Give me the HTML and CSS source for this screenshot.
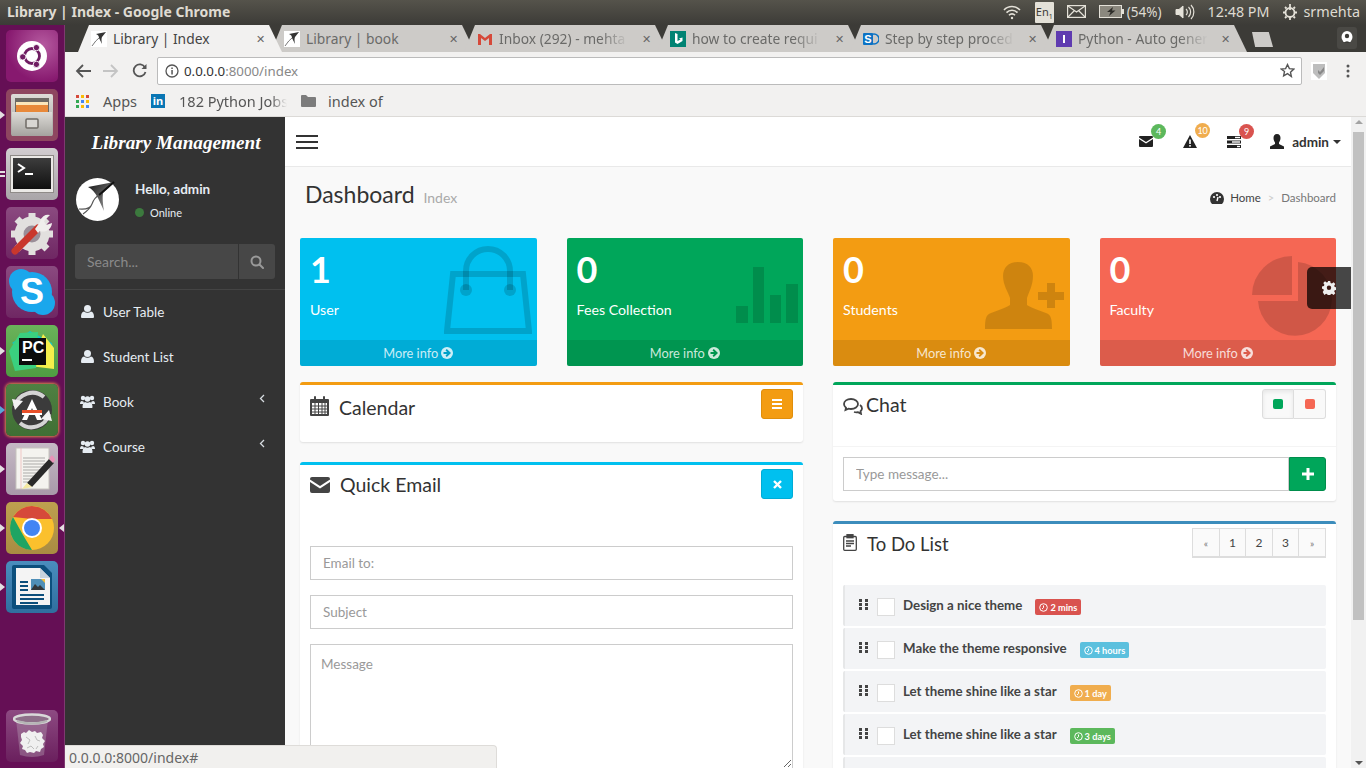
FILE: index.html
```html
<!DOCTYPE html>
<html lang="en">
<head>
    <meta charset="UTF-8">
    <title>Library | Index - Google Chrome</title>
    <link rel="stylesheet" href="styles.css">
</head>
<body>

    <!-- Ubuntu top panel -->
    <div class="panel">
        <div class="panel-title">Library | Index - Google Chrome</div>
        <div class="panel-right">
            <svg width="20" height="16" viewBox="0 0 20 16" fill="none" stroke="#e4e1d8" stroke-width="1.6"><path d="M2 6a11 11 0 0 1 16 0M4.500 8.600a7.500 7.500 0 0 1 11 0M7 11.200a4 4 0 0 1 6 0"/><circle cx="10" cy="14" r="1.200" fill="#e4e1d8" stroke="none"/></svg>
            <span class="ind-lang">En<sub>1</sub></span>
            <svg width="19" height="13" viewBox="0 0 19 13" fill="none" stroke="#e4e1d8" stroke-width="1.200"><rect x=".6" y=".6" width="17.800" height="11.800"/><path d="M1 1l8.500 6L18 1M1 12l6.500-6.500M18 12l-6.500-6.500"/></svg>
            <span class="ind-batt">
                <svg width="25" height="13" viewBox="0 0 25 13"><rect x=".5" y=".5" width="22" height="12" fill="#8b887e" stroke="#e4e1d8"/><rect x="23" y="4" width="2" height="5" fill="#e4e1d8"/><path d="M14 2l-6 5h3.500L10 11l6.500-5.500H13z" fill="#2e2d29"/></svg>
                (54%)
            </span>
            <svg width="20" height="16" viewBox="0 0 20 16" fill="none" stroke="#e4e1d8"><path d="M1 5.500h3l4-3.500v12l-4-3.500H1z" fill="#e4e1d8"/><path d="M11 5a4 4 0 0 1 0 6M13.500 3a7 7 0 0 1 0 10M16 1a10 10 0 0 1 0 14" stroke-width="1.200"/></svg>
            <span class="ind-clock">12:48 PM</span>
            <span class="ind-user">
                <svg width="16" height="16" viewBox="0 0 16 16" fill="none" stroke="#e4e1d8" stroke-width="1.800"><circle cx="8" cy="8.500" r="4.500"/><path d="M8 0v6M8 12.500v3.500M1 8.500h2M13 8.500h2M3 3l1.500 1.500M11.500 4.500L13 3M3 14l1.500-1.500M11.500 12.500L13 14"/></svg>
                srmehta
            </span>
        </div>
    </div>

    <div class="desktop">

        <!-- Launcher -->
        <div class="launcher">
            <div class="tile tile-ubuntu">
                <svg width="30" height="30" viewBox="0 0 34 34"><circle cx="17" cy="17" r="17" fill="#fff"/><circle cx="17" cy="17" r="8.500" fill="none" stroke="#6f1d62" stroke-width="3.200"/><circle cx="6.500" cy="18" r="3.600" fill="#6f1d62" stroke="#fff"/><circle cx="22" cy="7.500" r="3.600" fill="#6f1d62" stroke="#fff"/><circle cx="22" cy="26.500" r="3.600" fill="#6f1d62" stroke="#fff"/></svg>
            </div>
            <div class="tile tile-files has-pip">
                <svg width="42" height="44" viewBox="0 0 42 44"><defs><linearGradient id="cabinet" x1="0" y1="0" x2="0" y2="1"><stop offset="0" stop-color="#dedcd8"/><stop offset="1" stop-color="#a5a39f"/></linearGradient></defs><rect y="1" width="42" height="42" rx="2" fill="url(#cabinet)"/><rect x="4" y="5" width="34" height="14" fill="#6d6964"/><rect x="5" y="9" width="32" height="3" fill="#fbe6bb"/><rect x="5" y="12" width="32" height="7" fill="#e8893a"/><rect x="1" y="19" width="40" height="24" fill="url(#cabinet)"/><rect x="15" y="26" width="12" height="9" rx="1" fill="#d8d6d2" stroke="#6f6b66" stroke-width="1.500"/></svg>
            </div>
            <div class="tile tile-term has-pip-double">
                <svg width="44" height="38" viewBox="0 0 44 38"><defs><linearGradient id="termbg" x1="0" y1="0" x2="0" y2="1"><stop offset="0" stop-color="#3d3d3d"/><stop offset="1" stop-color="#101010"/></linearGradient></defs><rect x=".5" y=".5" width="43" height="37" fill="#ebe9e6" stroke="#8f8b88"/><rect x="3" y="3" width="38" height="31" fill="url(#termbg)"/><path d="M8 9l6 4-6 4" fill="none" stroke="#fff" stroke-width="2"/><rect x="15" y="18" width="8" height="2" fill="#fff"/></svg>
            </div>
            <div class="tile tile-plain">
                <svg width="46" height="46" viewBox="0 0 46 46"><circle cx="23" cy="24" r="13" fill="#9a8e98" stroke="#e2e0de" stroke-width="9"/><path d="M23 3v6M23 39v6M2 24h6M38 24h6M8 9l4 4M34 35l4 4M8 39l4-4M34 13l4-4" stroke="#e2e0de" stroke-width="7"/><path d="M6 41L29 18" stroke="#c9372c" stroke-width="7" stroke-linecap="round"/><path d="M26 19l5-7a8 8 0 0 1 10-7l-6 6 2 4 6-2a9 9 0 0 1-12 8l-2 2z" fill="#f0eeec"/></svg>
            </div>
            <div class="tile tile-plain">
                <svg width="48" height="48" viewBox="0 0 48 48"><circle cx="13" cy="13" r="12" fill="#1aa7ec"/><circle cx="35" cy="35" r="12" fill="#1aa7ec"/><circle cx="24" cy="24" r="20" fill="#1aa7ec"/><text x="24" y="36" class="skype-s">S</text></svg>
            </div>
            <div class="tile tile-pycharm has-pip">
                <svg width="48" height="48" viewBox="0 0 48 48"><path d="M4 16L22 4l22 12 2 12-14 4z" fill="#12c6c9"/><path d="M35 7l11 14 0 21-24-3z" fill="#f5ee4b"/><path d="M1 24L12 6l18-1-2 36L7 44z" fill="#3ad07f"/><rect x="11" y="11" width="27" height="27" fill="#0c0c0c"/><text x="14" y="26" class="pc-label">PC</text><rect x="14" y="32" width="10" height="2" fill="#fff"/></svg>
            </div>
            <div class="tile tile-update has-pip-blue">
                <svg width="44" height="44" viewBox="0 0 44 44"><circle cx="22" cy="22" r="20" fill="#3b3b3b"/><path d="M5 18a18 18 0 0 1 29-9M39 26a18 18 0 0 1-29 9" fill="none" stroke="#d4d4d4" stroke-width="4"/><path d="M2 11l11 2-8 9zM42 33l-11-2 8-9z" fill="#f2f2f2"/><path d="M22 11l-10 21h5l5-12 5 12h5z" fill="#fff"/><rect x="12" y="22" width="20" height="3" fill="#e8502a"/><rect x="12" y="25" width="20" height="2" fill="#fff"/></svg>
            </div>
            <div class="tile tile-gedit has-pip">
                <svg width="46" height="44" viewBox="0 0 46 44"><rect x="7" y="1" width="33" height="41" fill="#f4f3ef" stroke="#c6c3bd"/><path d="M12 1v41" stroke="#eeb6b6" stroke-width=".7"/><path d="M14 11h22M14 14h22M14 17h22M14 20h22M14 23h18M14 26h16M14 29h14M14 32h12M14 35h10" stroke="#8d8d8d" stroke-width=".7"/><path d="M18 36l22-24 5 4-22 24z" fill="#2a2a2a"/><path d="M40 12l2-3q1-1 2 0l2 3q.5 1-.5 2l-1.500 2z" fill="#e893b8"/><path d="M13 42l5-6 5 4z" fill="#f4e8a0"/></svg>
            </div>
            <div class="tile tile-chrome has-pip-both">
                <svg width="46" height="46" viewBox="0 0 46 46"><circle cx="23" cy="23" r="22" fill="#fbc02d"/><path d="M4 12A22 22 0 0 1 43 14L23 14z" fill="#d6493a"/><path d="M4 12L14 30 23 45A22 22 0 0 1 4 12z" fill="#1fa463"/><circle cx="23" cy="23" r="10" fill="#fff"/><circle cx="23" cy="23" r="8" fill="#4285f4"/></svg>
            </div>
            <div class="tile tile-writer has-pip">
                <svg width="44" height="46" viewBox="0 0 44 46"><path d="M4 1h30l8 8v34q0 2-2 2H4q-2 0-2-2V3q0-2 2-2z" fill="#0c4f7c"/><path d="M6 4h24l10 10v27H6z" fill="#f4f4f4"/><path d="M30 4v10h10z" fill="#c7d4dd"/><path d="M10 17h8v2h-8zM10 21h8v2h-8zM10 25h8v2h-8zM10 30h24v2H10zM10 34h24v2H10zM10 38h18v2H10z" fill="#0c4f7c"/><rect x="21" y="15" width="14" height="11" fill="#4f8fb8"/><path d="M21 26l4-6 3 3 2-2 5 5z" fill="#33383c"/><path d="M31 15h4v4z" fill="#f0c040"/></svg>
            </div>
            <div class="tile tile-trash">
                <svg width="38" height="46" viewBox="0 0 38 46"><path d="M3 6l4 36q12 4 24 0l4-36z" fill="#b79fb5" opacity=".4"/><ellipse cx="19" cy="6" rx="18" ry="4.500" fill="#8e6f89" stroke="#d9d9d9" stroke-width="2.500"/><path d="M4 8q15 5 30 0" fill="none" stroke="#b5b5b5" stroke-width="2"/><path d="M8 21l3-2 2 1 3-3 3 2 3-1 2 2 4-1 2 3-1 3 3 3-2 3 1 3-3 2-1 3-4-1-2 2-4-1-3 1-2-3-3-1 1-3-3-3 2-3-1-3z" fill="#f0f0f0"/><path d="M13 24l4 3-2 4M22 23l2 4 3 1M14 35l4-2 3 3M25 33l-2 3" fill="none" stroke="#bdbdbd"/></svg>
            </div>
        </div>

        <div class="browser">

            <!-- Tabs -->
            <div class="tabstrip">
                <div class="tab active">
                    <svg class="favicon" width="16" height="16" viewBox="0 0 16 16"><rect width="16" height="16" fill="#fff"/><path d="M15 1L5 3q3 1 3 4l3 6q-1-5 0-7z" fill="#333"/><path d="M8 7Q5 9 1 15" fill="none" stroke="#777"/></svg>
                    <span class="tab-title">Library | Index</span>
                    <span class="tab-close">&#10005;</span>
                </div>
                <div class="tab">
                    <svg class="favicon" width="16" height="16" viewBox="0 0 16 16"><rect width="16" height="16" fill="#fff"/><path d="M15 1L5 3q3 1 3 4l3 6q-1-5 0-7z" fill="#333"/><path d="M8 7Q5 9 1 15" fill="none" stroke="#777"/></svg>
                    <span class="tab-title">Library | book</span>
                    <span class="tab-close">&#10005;</span>
                </div>
                <div class="tab">
                    <svg class="favicon" width="16" height="16" viewBox="0 0 16 16"><path d="M1 3v11h3V7l4 3 4-3v7h3V3h-2L8 7 3 3z" fill="#d6493a"/></svg>
                    <span class="tab-title fade">Inbox (292) - mehta</span>
                    <span class="tab-close">&#10005;</span>
                </div>
                <div class="tab">
                    <svg class="favicon" width="16" height="16" viewBox="0 0 16 16"><rect width="16" height="16" fill="#008373"/><path d="M5 2l2.500 1v7l3-1.500-1.500-1 3.500-1v3.500L7.500 13 5 11.500z" fill="#fff"/></svg>
                    <span class="tab-title fade">how to create requi</span>
                    <span class="tab-close">&#10005;</span>
                </div>
                <div class="tab">
                    <svg class="favicon" width="16" height="16" viewBox="0 0 16 16"><circle cx="11" cy="8" r="5" fill="none" stroke="#0b72c4" stroke-width="1.500"/><rect y="2" width="10" height="12" rx="1" fill="#0b72c4"/><text x="5" y="12" class="fav-s">S</text></svg>
                    <span class="tab-title fade">Step by step proced</span>
                    <span class="tab-close">&#10005;</span>
                </div>
                <div class="tab">
                    <svg class="favicon" width="16" height="16" viewBox="0 0 16 16"><rect width="16" height="16" fill="#5f3bb0"/><rect x="7" y="4" width="2" height="8" fill="#fff"/></svg>
                    <span class="tab-title fade">Python - Auto gener</span>
                    <span class="tab-close">&#10005;</span>
                </div>
                <div class="newtab"></div>
                <div class="profile-btn">
                    <svg width="12" height="14" viewBox="0 0 12 14"><ellipse cx="6" cy="6" rx="5.500" ry="6" fill="#fff"/><circle cx="6" cy="5" r="2.200" fill="#3c3b37"/><path d="M2.500 12q3.500-3.500 7 0" fill="#3c3b37"/></svg>
                </div>
            </div>

            <!-- Address bar -->
            <div class="toolbar">
                <svg width="16" height="14" viewBox="0 0 16 14" fill="none" stroke="#555" stroke-width="1.800"><path d="M16 7H2M8 1L2 7l6 6"/></svg>
                <svg class="tool-fwd" width="16" height="14" viewBox="0 0 16 14" fill="none" stroke="#c4c4c4" stroke-width="1.800"><path d="M0 7h14M8 1l6 6-6 6"/></svg>
                <svg class="tool-reload" width="15" height="15" viewBox="0 0 15 15" fill="none" stroke="#555" stroke-width="1.800"><path d="M13 4.500A6 6 0 1 0 13.500 9"/><path d="M14.500 1v5h-5z" fill="#555" stroke="none"/></svg>
                <div class="urlbar">
                    <svg class="url-info" width="14" height="14" viewBox="0 0 14 14"><circle cx="7" cy="7" r="6" fill="none" stroke="#555" stroke-width="1.300"/><rect x="6.300" y="6" width="1.500" height="4.500" fill="#555"/><rect x="6.300" y="3.500" width="1.500" height="1.500" fill="#555"/></svg>
                    <span class="url-host">0.0.0.0</span><span class="url-rest">:8000/index</span>
                    <svg class="url-star" width="15" height="15" viewBox="0 0 24 24" fill="none" stroke="#555" stroke-width="2.200"><path d="M12 2.500l3 6.500 7 .8-5.200 4.800 1.400 7L12 17l-6.200 3.600 1.400-7L2 9.800 9 9z"/></svg>
                </div>
                <svg class="tool-ext" width="16" height="18" viewBox="0 0 16 18"><rect width="16" height="18" fill="#fff"/><path d="M2 2h12v9l-6 6-6-6z" fill="#bdbdbd"/><path d="M7 8l2 2 4-5v4l-4 4-2-2z" fill="#888"/></svg>
                <svg class="tool-menu" width="4" height="14" viewBox="0 0 4 14" fill="#555"><circle cx="2" cy="2" r="1.500"/><circle cx="2" cy="7" r="1.500"/><circle cx="2" cy="12" r="1.500"/></svg>
            </div>

            <!-- Bookmarks -->
            <div class="bookmarks">
                <svg width="13" height="13" viewBox="0 0 13 13"><rect width="3" height="3" fill="#d6493a"/><rect x="5" width="3" height="3" fill="#fbbc05"/><rect x="10" width="3" height="3" fill="#d6493a"/><rect y="5" width="3" height="3" fill="#34a853"/><rect x="5" y="5" width="3" height="3" fill="#4285f4"/><rect x="10" y="5" width="3" height="3" fill="#fbbc05"/><rect y="10" width="3" height="3" fill="#34a853"/><rect x="5" y="10" width="3" height="3" fill="#fbbc05"/><rect x="10" y="10" width="3" height="3" fill="#4285f4"/></svg>
                <span class="bm-apps-text">Apps</span>
                <span class="bm-in">in</span>
                <span class="bm-jobs">182 Python Jobs</span>
                <svg class="bm-folder" width="15" height="12" viewBox="0 0 15 12"><path d="M0 1q0-1 1-1h4l2 2h7q1 0 1 1v8q0 1-1 1H1q-1 0-1-1z" fill="#7c7c7c"/></svg>
                <span>index of</span>
            </div>

            <div class="page">

                <!-- Sidebar -->
                <aside class="sidebar">
                    <div class="brand">Library Management</div>
                    <div class="user-panel">
                        <svg class="avatar" width="43" height="43" viewBox="0 0 43 43"><defs><linearGradient id="wing" x1="0" y1="0" x2="1" y2="1"><stop offset="0" stop-color="#111"/><stop offset="1" stop-color="#aaa"/></linearGradient></defs><circle cx="21.500" cy="21.500" r="21.500" fill="#fff"/><path d="M38 4L12 9q6 3 10 11l6 13q-2-11-1-18z" fill="url(#wing)"/><path d="M38 4L23 17" stroke="#111" stroke-width="2"/><path d="M23 17q-5 3-7 9t-13 5M16 26q-2 5-9 10" fill="none" stroke="#555" stroke-width="1.100"/></svg>
                        <div class="user-info">
                            <div class="user-name">Hello, admin</div>
                            <div class="user-status"><span class="status-dot"></span>Online</div>
                        </div>
                    </div>
                    <div class="search">
                        <input type="text" placeholder="Search...">
                        <div class="search-btn">
                            <svg width="14" height="14" viewBox="0 0 14 14" fill="none" stroke="#999" stroke-width="2"><circle cx="6" cy="6" r="4.500"/><path d="M9.500 9.500L13 13" stroke-linecap="round"/></svg>
                        </div>
                    </div>
                    <ul class="menu">
                        <li>
                            <svg width="13" height="13" viewBox="0 0 13 13" fill="#e6ecf2"><circle cx="6.500" cy="3.500" r="3.500"/><path d="M1 13q-1 0-1-1 0-5 3-5.500 3.500 2.500 7 0 3 .5 3 5.500 0 1-1 1z"/></svg>
                            User Table
                        </li>
                        <li>
                            <svg width="13" height="13" viewBox="0 0 13 13" fill="#e6ecf2"><circle cx="6.500" cy="3.500" r="3.500"/><path d="M1 13q-1 0-1-1 0-5 3-5.500 3.500 2.500 7 0 3 .5 3 5.500 0 1-1 1z"/></svg>
                            Student List
                        </li>
                        <li>
                            <svg width="15" height="13" viewBox="0 0 15 13" fill="#e6ecf2"><circle cx="3" cy="3" r="2.200"/><circle cx="12" cy="3" r="2.200"/><circle cx="7.500" cy="4" r="2.800"/><path d="M0 9q0-3 2-3l2 1-1 2zM15 9q0-3-2-3l-2 1 1 2zM3 13q-.5 0-.5-1 0-4 2.500-5 2.500 1.500 5 0 2.500 1 2.500 5 0 1-.5 1z"/></svg>
                            Book
                            <svg class="menu-arrow" width="6" height="9" viewBox="0 0 6 9" fill="none" stroke="#d8dde2" stroke-width="1.300"><path d="M5 1L1.500 4.500 5 8"/></svg>
                        </li>
                        <li>
                            <svg width="15" height="13" viewBox="0 0 15 13" fill="#e6ecf2"><circle cx="3" cy="3" r="2.200"/><circle cx="12" cy="3" r="2.200"/><circle cx="7.500" cy="4" r="2.800"/><path d="M0 9q0-3 2-3l2 1-1 2zM15 9q0-3-2-3l-2 1 1 2zM3 13q-.5 0-.5-1 0-4 2.500-5 2.500 1.500 5 0 2.500 1 2.500 5 0 1-.5 1z"/></svg>
                            Course
                            <svg class="menu-arrow" width="6" height="9" viewBox="0 0 6 9" fill="none" stroke="#d8dde2" stroke-width="1.300"><path d="M5 1L1.500 4.500 5 8"/></svg>
                        </li>
                    </ul>
                </aside>

                <div class="main">
                    <!-- Navbar -->
                    <nav class="navbar">
                        <div class="hamburger"><span></span><span></span><span></span></div>
                        <div class="nav-right">
                            <div class="nav-icon">
                                <svg width="14" height="11" viewBox="0 0 14 11" fill="#222"><path d="M0 1q0-1 1-1h12q1 0 1 1v.500L7 6 0 1.500z"/><path d="M0 3l7 4.500L14 3v7q0 1-1 1H1q-1 0-1-1z"/></svg>
                                <span class="badge badge-green">4</span>
                            </div>
                            <div class="nav-icon">
                                <svg width="14" height="13" viewBox="0 0 14 13"><path d="M7 0l7 13H0z" fill="#222"/><rect x="6.200" y="4.500" width="1.600" height="4.500" fill="#fff"/><rect x="6.200" y="10" width="1.600" height="1.600" fill="#fff"/></svg>
                                <span class="badge badge-orange">10</span>
                            </div>
                            <div class="nav-icon">
                                <svg width="14" height="12" viewBox="0 0 14 12"><rect width="14" height="3" fill="#222"/><rect y="4.500" width="14" height="3" fill="#222"/><rect y="9" width="14" height="3" fill="#222"/><rect x="8" y=".8" width="5" height="1.400" fill="#fff"/><rect x="5" y="5.300" width="8" height="1.400" fill="#fff"/><rect x="10" y="9.800" width="3" height="1.400" fill="#fff"/></svg>
                                <span class="badge badge-red">9</span>
                            </div>
                            <div class="nav-user">
                                <svg width="14" height="15" viewBox="0 0 14 15" fill="#222"><path d="M7 0c2.500 0 3.500 2 3.500 4 0 2-1 3.500-1.500 4.500v1.500l5 2.500V15H0v-2.500L5 10V8.500C4.500 7.500 3.500 6 3.500 4c0-2 1-4 3.500-4z"/></svg>
                                <span class="nav-name">admin</span>
                                <span class="caret"></span>
                            </div>
                        </div>
                    </nav>

                    <div class="content">
                        <div class="page-head">
                            <h1>Dashboard <small>Index</small></h1>
                            <div class="crumbs">
                                <svg width="14" height="12" viewBox="0 0 14 12"><path d="M7 0a7 7 0 0 0-7 7q0 3 2 5h10q2-2 2-5a7 7 0 0 0-7-7z" fill="#333"/><circle cx="4" cy="5" r="1.100" fill="#fff"/><circle cx="7" cy="3" r="1.100" fill="#fff"/><circle cx="10" cy="5" r="1.100" fill="#fff"/><path d="M7 9l1-4" stroke="#fff" stroke-width="1.400"/></svg>
                                <span class="crumb-home">Home</span>
                                <span class="crumb-sep">&gt;</span>
                                <span class="crumb-now">Dashboard</span>
                            </div>
                        </div>

                        <!-- Small boxes -->
                        <div class="stats">
                            <div class="stat stat-blue">
                                <div class="stat-body">
                                    <h3>1</h3>
                                    <p>User</p>
                                    <svg class="stat-icon" width="88" height="88" viewBox="0 0 88 88" fill="none" stroke="currentColor" stroke-width="6"><path d="M9 28H79L85 85H3z"/><path d="M22 44V25a22 22 0 0 1 44 0v19"/><circle cx="22" cy="44" r="6" fill="currentColor" stroke="none"/><circle cx="66" cy="44" r="6" fill="currentColor" stroke="none"/></svg>
                                </div>
                                <div class="stat-foot">More info <svg width="12" height="12" viewBox="0 0 12 12"><circle cx="6" cy="6" r="6" fill="currentColor"/><path d="M2.500 5H6L4.500 3.300 5.800 2 10 6 5.800 10 4.500 8.700 6 7H2.500z" class="arrow-cut"/></svg></div>
                            </div>
                            <div class="stat stat-green">
                                <div class="stat-body">
                                    <h3>0</h3>
                                    <p>Fees Collection</p>
                                    <svg class="stat-icon" width="62" height="56" viewBox="0 0 62 56" fill="currentColor"><rect y="39" width="12" height="17"/><rect x="17" width="11" height="56"/><rect x="34" y="28" width="11" height="28"/><rect x="50" y="17" width="12" height="39"/></svg>
                                </div>
                                <div class="stat-foot">More info <svg width="12" height="12" viewBox="0 0 12 12"><circle cx="6" cy="6" r="6" fill="currentColor"/><path d="M2.500 5H6L4.500 3.300 5.800 2 10 6 5.800 10 4.500 8.700 6 7H2.500z" class="arrow-cut"/></svg></div>
                            </div>
                            <div class="stat stat-orange">
                                <div class="stat-body">
                                    <h3>0</h3>
                                    <p>Students</p>
                                    <svg class="stat-icon" width="80" height="67" viewBox="0 0 80 67" fill="currentColor"><path d="M33 0c10 0 15 6 15 14 0 9-4 16-6 22v7c4 3 12 5 19 8 5 2 6 5 6 16H0c0-11 1-14 6-16 7-3 15-5 19-8v-7c-2-6-7-13-7-22C18 6 23 0 33 0z"/><path d="M62 21h8v9h9v8h-9v8h-8v-8h-9v-8h9z"/></svg>
                                </div>
                                <div class="stat-foot">More info <svg width="12" height="12" viewBox="0 0 12 12"><circle cx="6" cy="6" r="6" fill="currentColor"/><path d="M2.500 5H6L4.500 3.300 5.800 2 10 6 5.800 10 4.500 8.700 6 7H2.500z" class="arrow-cut"/></svg></div>
                            </div>
                            <div class="stat stat-red">
                                <div class="stat-body">
                                    <h3>0</h3>
                                    <p>Faculty</p>
                                    <svg class="stat-icon" width="80" height="80" viewBox="0 0 80 80" fill="currentColor"><path d="M40 0v39H0A40 39 0 0 1 40 0z"/><path d="M46 6A37 37 0 1 1 6 45H46z"/></svg>
                                </div>
                                <div class="stat-foot">More info <svg width="12" height="12" viewBox="0 0 12 12"><circle cx="6" cy="6" r="6" fill="currentColor"/><path d="M2.500 5H6L4.500 3.300 5.800 2 10 6 5.800 10 4.500 8.700 6 7H2.500z" class="arrow-cut"/></svg></div>
                            </div>
                        </div>

                        <div class="columns">
                            <div class="col">
                                <section class="box box-orange box-calendar">
                                    <div class="box-head">
                                        <svg class="box-icon" width="19" height="20" viewBox="0 0 19 20" fill="#444"><path d="M1 3h3V1q0-1 1-1t1 1v2h7V1q0-1 1-1t1 1v2h3q1 0 1 1v15q0 1-1 1H1q-1 0-1-1V4q0-1 1-1z"/><path d="M2 7h15v11H2z" fill="#fff"/><path d="M2 10h15M2 13h15M2 16h15M5 7v11M8.500 7v11M12 7v11M15 7v11" stroke="#444"/></svg>
                                        <h2>Calendar</h2>
                                        <button class="btn-square btn-orange"><span class="mini-bars"><i></i><i></i><i></i></span></button>
                                    </div>
                                </section>

                                <section class="box box-cyan box-email">
                                    <div class="box-head">
                                        <svg class="box-icon" width="20" height="16" viewBox="0 0 20 16" fill="#444"><path d="M0 2q0-2 2-2h16q2 0 2 2v.500L10 9 0 2.500z"/><path d="M0 5l10 6.500L20 5v9q0 2-2 2H2q-2 0-2-2z"/></svg>
                                        <h2>Quick Email</h2>
                                        <button class="btn-square btn-cyan"><svg width="9" height="9" viewBox="0 0 9 9" stroke="#fff" stroke-width="2.400"><path d="M1 1l7 7M8 1L1 8"/></svg></button>
                                    </div>
                                    <div class="email-form">
                                        <input type="text" class="field" placeholder="Email to:">
                                        <input type="text" class="field" placeholder="Subject">
                                        <textarea class="field-area" placeholder="Message"></textarea>
                                    </div>
                                </section>
                            </div>

                            <div class="col">
                                <section class="box box-green box-chat">
                                    <div class="box-head chat-head">
                                        <svg class="box-icon" width="20" height="17" viewBox="0 0 20 17" fill="none" stroke="#444" stroke-width="1.800"><path d="M8 1C4 1 1 3 1 6c0 1.500 1 3 2 3.800L2.500 12l3-1.400q1.200.4 2.500.4c4 0 7-2.200 7-5s-3-5-7-5z"/><path d="M17 7c1.500 1 2 2 2 3.500 0 1.200-.8 2.200-1.500 2.800l.5 2.500-3-1.600q-2 .4-4-.2"/></svg>
                                        <h2>Chat</h2>
                                        <div class="btn-group">
                                            <button class="pick"><i class="pick-green"></i></button>
                                            <button class="pick"><i class="pick-red"></i></button>
                                        </div>
                                    </div>
                                    <div class="chat-foot">
                                        <input type="text" class="field" placeholder="Type message...">
                                        <button class="btn-plus"><svg width="12" height="12" viewBox="0 0 12 12" fill="#fff"><path d="M4.500 0h3v4.500H12v3H7.500V12h-3V7.500H0v-3h4.500z"/></svg></button>
                                    </div>
                                </section>

                                <section class="box box-blue box-todo">
                                    <div class="box-head todo-head">
                                        <svg class="box-icon" width="14" height="17" viewBox="0 0 14 17" fill="none" stroke="#444" stroke-width="1.300"><rect x=".7" y="2.500" width="12.600" height="13.800" rx="1"/><rect x="4" y=".7" width="6" height="3" fill="#444"/><path d="M3 7h8M3 9.500h8M3 12h5"/></svg>
                                        <h2>To Do List</h2>
                                        <ul class="pager">
                                            <li class="pager-end">&laquo;</li>
                                            <li>1</li>
                                            <li>2</li>
                                            <li>3</li>
                                            <li class="pager-end">&raquo;</li>
                                        </ul>
                                    </div>
                                    <ul class="todo">
                                        <li>
                                            <span class="grip"><i></i><i></i><i></i><i></i><i></i><i></i></span>
                                            <span class="check"></span>
                                            <span class="todo-text">Design a nice theme</span>
                                            <span class="tag tag-red"><svg width="9" height="9" viewBox="0 0 9 9" fill="none" stroke="currentColor"><circle cx="4.500" cy="4.500" r="3.800"/><path d="M4.500 2.500v2.200L3 6"/></svg>2 mins</span>
                                        </li>
                                        <li>
                                            <span class="grip"><i></i><i></i><i></i><i></i><i></i><i></i></span>
                                            <span class="check"></span>
                                            <span class="todo-text">Make the theme responsive</span>
                                            <span class="tag tag-cyan"><svg width="9" height="9" viewBox="0 0 9 9" fill="none" stroke="currentColor"><circle cx="4.500" cy="4.500" r="3.800"/><path d="M4.500 2.500v2.200L3 6"/></svg>4 hours</span>
                                        </li>
                                        <li>
                                            <span class="grip"><i></i><i></i><i></i><i></i><i></i><i></i></span>
                                            <span class="check"></span>
                                            <span class="todo-text">Let theme shine like a star</span>
                                            <span class="tag tag-orange"><svg width="9" height="9" viewBox="0 0 9 9" fill="none" stroke="currentColor"><circle cx="4.500" cy="4.500" r="3.800"/><path d="M4.500 2.500v2.200L3 6"/></svg>1 day</span>
                                        </li>
                                        <li>
                                            <span class="grip"><i></i><i></i><i></i><i></i><i></i><i></i></span>
                                            <span class="check"></span>
                                            <span class="todo-text">Let theme shine like a star</span>
                                            <span class="tag tag-green"><svg width="9" height="9" viewBox="0 0 9 9" fill="none" stroke="currentColor"><circle cx="4.500" cy="4.500" r="3.800"/><path d="M4.500 2.500v2.200L3 6"/></svg>3 days</span>
                                        </li>
                                        <li></li>
                                    </ul>
                                </section>
                            </div>
                        </div>
                    </div>

                    <!-- Settings slide-out -->
                    <div class="gear-tab">
                        <svg width="14" height="14" viewBox="0 0 14 14" fill="#eee"><path d="M5.800 0h2.400l.4 1.900 1.300.5L11.600 1.300l1.700 1.700-1.100 1.700.5 1.300 1.900.4v2.400l-1.900.4-.5 1.300 1.100 1.700-1.700 1.700-1.700-1.100-1.300.5-.4 1.900H5.800l-.4-1.900-1.300-.5-1.700 1.100L.7 11l1.100-1.700-.5-1.300L0 7.800V5.400l1.900-.4.5-1.300L1.300 2 3 .3l1.700 1.100 1.300-.5zM7 4.500a2.200 2.200 0 1 0 0 4.400 2.200 2.200 0 0 0 0-4.400z" fill-rule="evenodd"/></svg>
                    </div>
                </div>

                <!-- Page scrollbar -->
                <div class="scrollbar">
                    <span class="sb-up"></span>
                    <div class="sb-thumb"></div>
                    <span class="sb-down"></span>
                </div>

                <div class="status-bubble">0.0.0.0:8000/index#</div>
            </div>
        </div>
    </div>

</body>
</html>
```

FILE: styles.css
```css
/* General Styling */
* {
    margin: 0;
    padding: 0;
    box-sizing: border-box;
}
html, body {
    width: 1366px;
    height: 768px;
    overflow: hidden;
    font-family: 'Lato', sans-serif;
    font-size: 14px;
    color: #333;
}
ul {
    list-style: none;
}
input, textarea, button {
    font-family: inherit;
}

/* Top panel */
.panel {
    height: 25px;
    display: flex;
    justify-content: space-between;
    align-items: center;
    padding: 0 6px 2px 7px;
    background: linear-gradient(#55534b, #3c3b37);
    color: #dfdbd2;
    font-family: 'Noto Sans', sans-serif;
}
.panel-title {
    font-size: 14px;
    font-weight: 700;
}
.panel-right {
    display: flex;
    align-items: center;
    gap: 13px;
    font-size: 13.500px;
}
.ind-lang {
    width: 19px;
    height: 21px;
    margin-top: 2px;
    background: #e4e1d8;
    color: #3c3b37;
    font-size: 11px;
    line-height: 20px;
    text-align: center;
    border-radius: 1px;
}
.ind-lang sub {
    font-size: 7px;
}
.ind-batt, .ind-user {
    display: flex;
    align-items: center;
    gap: 3px;
}
.ind-user {
    gap: 5px;
    font-size: 14.400px;
}
.ind-clock {
    font-size: 14.300px;
}

/* Desktop */
.desktop {
    display: flex;
    height: 743px;
}
.launcher {
    width: 65px;
    flex: none;
    display: flex;
    flex-direction: column;
    align-items: flex-start;
    gap: 7px;
    padding: 5px 0 6px 6px;
    background: #650f55;
    border-right: 1px solid #7e3a70;
}
.tile {
    position: relative;
    width: 52px;
    height: 52px;
    flex: none;
    display: flex;
    align-items: center;
    justify-content: center;
    border-radius: 5px;
    background: #7c2d6e;
}
.tile-ubuntu { background: radial-gradient(circle at 70% 30%, #b65ba0, #87196f 70%); }
.tile-files { background: #8e4660; }
.tile-term { background: linear-gradient(#d2cdd0, #a9a5a8); }
.tile-plain { background: linear-gradient(#8b4a80, #6f2763); }
.tile-pycharm { background: linear-gradient(#6ab35a, #4f9c42); }
.tile-update { background: linear-gradient(#4f8042, #3f6f34); box-shadow: 0 0 3px 1px #e08a4c; }
.tile-gedit { background: linear-gradient(#c5b9c5, #a899a9); }
.tile-chrome { background: linear-gradient(#bea04f, #a98c42); }
.tile-writer { background: linear-gradient(#4a8dbd, #2f6f9f); }
.tile-trash { margin-top: auto; background: linear-gradient(#8d4a82, #6a1f5d); }
.skype-s {
    font-family: 'Liberation Sans', sans-serif;
    font-size: 36px;
    font-weight: 700;
    fill: #fff;
    text-anchor: middle;
}
.pc-label {
    font-family: 'Liberation Sans', sans-serif;
    font-size: 16px;
    font-weight: 700;
    fill: #fff;
}
.fav-s {
    font-family: 'Liberation Sans', sans-serif;
    font-size: 11px;
    font-weight: 700;
    fill: #fff;
    text-anchor: middle;
}
.has-pip::before, .has-pip-both::before, .has-pip-both::after, .has-pip-double::before, .has-pip-blue::before {
    content: "";
    position: absolute;
    left: -6px;
    top: 22px;
    border: 4px solid transparent;
    border-left: 5px solid #e4e0e2;
    border-right: 0;
}
.has-pip-both::after {
    left: auto;
    right: -6px;
    border-left: 0;
    border-right: 5px solid #e4e0e2;
}
.has-pip-double::before {
    border: 0;
    width: 5px;
    height: 6px;
    top: 23px;
    background: linear-gradient(#e4e0e2 2px, transparent 2px, transparent 4px, #e4e0e2 4px);
}
.has-pip-blue::before {
    border-left-color: #5aa6d8;
}

/* Browser chrome */
.browser {
    flex: 1;
    min-width: 0;
    display: flex;
    flex-direction: column;
}
.tabstrip {
    height: 27px;
    display: flex;
    align-items: flex-end;
    padding-left: 13px;
    background: #3c3b37;
}
.tab {
    width: 204px;
    height: 27px;
    margin-right: -11px;
    flex: none;
    display: flex;
    align-items: center;
    padding: 0 16px 0 13px;
    background: #cdcbc8;
    color: #6a6a68;
    font-family: 'Noto Sans', sans-serif;
    font-size: 13.800px;
    clip-path: polygon(11px 0, calc(100% - 13px) 0, 100% 100%, 0 100%);
}
.tab.active {
    background: #f2f1f0;
    color: #444;
    z-index: 2;
}
.favicon {
    flex: none;
    margin-right: 6px;
}
.tab-title {
    flex: 1;
    min-width: 0;
    white-space: nowrap;
}
.tab-title.fade {
    -webkit-mask-image: linear-gradient(to right, #000 72%, transparent 92%);
    mask-image: linear-gradient(to right, #000 72%, transparent 92%);
}
.tab-close {
    flex: none;
    width: 12px;
    font-size: 11px;
    text-align: center;
    color: #666;
}
.newtab {
    width: 21px;
    height: 15px;
    margin: 0 0 5px 16px;
    background: #cdcbc8;
    clip-path: polygon(0 0, 80% 0, 100% 100%, 15% 100%);
}
.profile-btn {
    width: 20px;
    height: 22px;
    margin: 0 9px 3px auto;
    display: flex;
    align-items: center;
    justify-content: center;
    background: #4a4945;
    border-radius: 3px;
}
.toolbar {
    height: 37px;
    flex: none;
    display: flex;
    align-items: center;
    padding-left: 10px;
    background: #f2f1f0;
}
.tool-fwd { margin-left: 12px; }
.tool-reload { margin-left: 13px; }
.urlbar {
    width: 1145px;
    height: 28px;
    margin-left: 10px;
    display: flex;
    align-items: center;
    padding: 0 6px 0 7px;
    background: #fff;
    border: 1px solid #bbb;
    border-radius: 2px;
    font-family: 'Noto Sans', sans-serif;
    font-size: 13.300px;
}
.url-info { margin-right: 5px; }
.url-host { color: #333; }
.url-rest { color: #888; }
.url-star { margin-left: auto; }
.tool-ext { margin-left: 9px; }
.tool-menu { margin-left: 19px; }
.bookmarks {
    height: 28px;
    flex: none;
    display: flex;
    align-items: center;
    padding: 0 0 3px 11px;
    background: #f2f1f0;
    font-family: 'Noto Sans', sans-serif;
    font-size: 14.500px;
    color: #555;
    border-bottom: 1px solid #dcdad7;
}
.bm-apps-text { margin-left: 14px; }
.bm-in {
    width: 14px;
    height: 14px;
    margin-left: 14px;
    background: #0976b4;
    color: #fff;
    font-size: 11px;
    font-weight: 700;
    line-height: 14px;
    text-align: center;
}
.bm-jobs {
    width: 108px;
    margin-left: 14px;
    white-space: nowrap;
    -webkit-mask-image: linear-gradient(to right, #000 85%, transparent);
    mask-image: linear-gradient(to right, #000 85%, transparent);
}
.bm-folder {
    margin: 0 12px 0 14px;
}

/* Page */
.page {
    position: relative;
    flex: 1;
    min-height: 0;
    display: flex;
    overflow: hidden;
}
.status-bubble {
    position: absolute;
    left: 0;
    bottom: 0;
    width: 432px;
    height: 23px;
    padding: 2px 4px;
    background: #f1f0ee;
    border: 1px solid #dedcd9;
    border-width: 1px 1px 0 0;
    border-top-right-radius: 4px;
    font-family: 'Noto Sans', sans-serif;
    font-size: 14px;
    color: #666;
}

/* Sidebar */
.sidebar {
    width: 220px;
    flex: none;
    background: #333;
    color: #e6ecf2;
}
.brand {
    height: 49px;
    padding: 15px 0 0 2px;
    text-align: center;
    font-family: 'Liberation Serif', serif;
    font-style: italic;
    font-weight: 700;
    font-size: 19.200px;
    color: #fff;
}
.user-panel {
    display: flex;
    padding: 12px 0 0 11px;
    height: 78px;
}
.avatar {
    flex: none;
}
.user-info {
    margin-left: 16px;
    padding-top: 3px;
}
.user-name {
    font-weight: 700;
    font-size: 13.500px;
}
.user-status {
    display: flex;
    align-items: center;
    gap: 6px;
    margin-top: 9px;
    font-size: 11px;
}
.status-dot {
    width: 9px;
    height: 9px;
    border-radius: 50%;
    background: #3c7a3e;
}
.search {
    display: flex;
    height: 35px;
    margin: 0 10px;
    background: #474747;
    border-radius: 3px;
}
.search input {
    flex: 1;
    min-width: 0;
    padding-left: 12px;
    background: none;
    border: none;
    outline: none;
    font-size: 14px;
    color: #ccc;
}
.search input::placeholder {
    color: #8a8a8a;
}
.search-btn {
    width: 37px;
    display: flex;
    align-items: center;
    justify-content: center;
    border-left: 1px solid #333;
}
.menu {
    margin-top: 10px;
    border-top: 1px solid #444;
}
.menu li {
    position: relative;
    height: 45px;
    display: flex;
    align-items: center;
    padding: 0 0 2px 15px;
    font-size: 13.500px;
}
.menu li svg:first-child {
    width: 15px;
    margin-right: 8px;
}
.menu-arrow {
    position: absolute;
    right: 20px;
    top: 14px;
}

/* Navbar */
.main {
    position: relative;
    flex: 1;
    min-width: 0;
    background: #f9f9f9;
}
.navbar {
    height: 50px;
    display: flex;
    align-items: center;
    justify-content: space-between;
    padding: 0 10px 0 11px;
    background: #fff;
    border-bottom: 1px solid #e9e9e9;
}
.hamburger span {
    display: block;
    width: 22px;
    height: 2px;
    margin: 4px 0;
    background: #333;
}
.nav-right {
    display: flex;
    align-items: center;
}
.nav-icon {
    position: relative;
    width: 44px;
    display: flex;
    justify-content: center;
}
.badge {
    position: absolute;
    left: 27px;
    top: -12px;
    width: 15px;
    height: 15px;
    border-radius: 50%;
    color: #fff;
    font-size: 9px;
    line-height: 15px;
    text-align: center;
}
.badge-green { background: #5cb85c; }
.badge-orange { background: #f0ad4e; }
.badge-red { background: #d9534f; }
.nav-user {
    display: flex;
    align-items: center;
    margin-left: 14px;
    font-size: 13.500px;
    font-weight: 700;
}
.nav-name {
    margin: 0 4px 0 8px;
}
.caret {
    border: 4px solid transparent;
    border-top-color: #333;
    border-bottom: 0;
}

/* Content */
.content {
    padding: 0 15px;
}
.page-head {
    height: 71px;
    display: flex;
    justify-content: space-between;
    align-items: center;
    padding: 0 0 18px 5px;
}
.page-head h1 {
    font-size: 23px;
    font-weight: 400;
}
.page-head small {
    margin-left: 3px;
    font-size: 14px;
    color: #aaa;
}
.crumbs {
    display: flex;
    align-items: center;
    padding-top: 8px;
    font-size: 11.500px;
}
.crumb-home { margin-left: 6px; color: #444; }
.crumb-sep { margin: 0 7px; color: #ccc; font-size: 11px; }
.crumb-now { color: #777; }

/* Small boxes */
.stats {
    display: grid;
    grid-template-columns: repeat(4, 1fr);
    gap: 30px;
}
.stat {
    height: 128px;
    display: flex;
    flex-direction: column;
    border-radius: 2px;
    color: #fff;
    overflow: hidden;
}
.stat-body {
    position: relative;
    flex: 1;
    padding: 9px 10px;
}
.stat-body h3 {
    font-size: 36px;
    line-height: 44px;
    font-weight: 700;
}
.stat-body p {
    margin-top: 10px;
    font-size: 14.200px;
}
.stat-icon {
    position: absolute;
    right: 5px;
    color: rgba(0, 0, 0, .15);
}
.stat-blue .stat-icon { bottom: 6px; }
.stat-green .stat-icon { bottom: 17px; }
.stat-orange .stat-icon { bottom: 11px; }
.stat-red .stat-icon { top: 18px; right: 4px; }
.stat-foot {
    height: 26px;
    display: flex;
    align-items: center;
    justify-content: center;
    gap: 3px;
    background: rgba(0, 0, 0, .1);
    color: rgba(255, 255, 255, .8);
    font-size: 12.800px;
}
.stat-blue { background: #00c0ef; }
.stat-green { background: #00a65a; }
.stat-orange { background: #f39c12; }
.stat-red { background: #f56754; }
.arrow-cut { fill: #00a1c8; }
.stat-green .arrow-cut { fill: #00954f; }
.stat-orange .arrow-cut { fill: #da8c10; }
.stat-red .arrow-cut { fill: #dc5c4b; }

/* Columns */
.columns {
    display: grid;
    grid-template-columns: 1fr 1fr;
    gap: 30px;
    margin-top: 16px;
}
.col {
    display: flex;
    flex-direction: column;
    gap: 20px;
    min-width: 0;
}
.box {
    background: #fff;
    border-top: 3px solid #ccc;
    border-radius: 3px;
    box-shadow: 0 1px 2px rgba(0, 0, 0, .1);
}
.box-orange { border-top-color: #f39c12; }
.box-cyan { border-top-color: #00c0ef; }
.box-green { border-top-color: #00a65a; }
.box-blue { border-top-color: #3c8dbc; }
.box-calendar { height: 60px; }
.box-head {
    display: flex;
    align-items: flex-start;
    padding: 4px 10px 0;
}
.box-head h2 {
    flex: 1;
    font-size: 19.500px;
    font-weight: 400;
    padding-top: 7px;
}
.box-icon {
    margin-top: 7px;
    margin-right: 10px;
}
.btn-square {
    width: 32px;
    height: 30px;
    display: flex;
    align-items: center;
    justify-content: center;
    border: 1px solid transparent;
    border-radius: 3px;
}
.btn-orange {
    background: #f39c12;
    border-color: #e08e0b;
}
.btn-cyan {
    background: #00c0ef;
    border-color: #00acd6;
}
.mini-bars i {
    display: block;
    width: 10px;
    height: 2px;
    margin: 2px 0;
    background: #fff;
}
.box-email {
    height: 400px;
}
.box-email .box-head h2 {
    padding-top: 4px;
}
.box-email .box-icon {
    margin-top: 8px;
}
.email-form {
    display: flex;
    flex-direction: column;
    gap: 15px;
    padding: 47px 10px 0;
}
.field {
    width: 100%;
    height: 34px;
    padding: 0 12px;
    border: 1px solid #ccc;
    outline: none;
    font-size: 13.500px;
    color: #555;
}
.field::placeholder, .field-area::placeholder {
    color: #999;
}
.field-area {
    width: 100%;
    height: 125px;
    padding: 11px 10px;
    border: 1px solid #ccc;
    outline: none;
    font-size: 13.500px;
}
.chat-head {
    height: 62px;
    border-bottom: 1px solid #f4f4f4;
}
.chat-head .box-icon {
    margin-right: 3px;
    margin-top: 9px;
}
.chat-head h2 {
    padding-top: 4px;
}
.btn-group {
    display: flex;
}
.pick {
    width: 32px;
    height: 30px;
    display: flex;
    align-items: center;
    justify-content: center;
    background: #f9f9f9;
    border: 1px solid #ddd;
}
.pick:first-child {
    border-radius: 3px 0 0 3px;
    box-shadow: inset 0 2px 4px rgba(0, 0, 0, .08);
}
.pick:last-child {
    border-left: 0;
    border-radius: 0 3px 3px 0;
}
.pick i {
    width: 10px;
    height: 10px;
    border-radius: 2px;
}
.pick-green { background: #00a65a; }
.pick-red { background: #f56754; }
.chat-foot {
    display: flex;
    padding: 10px;
}
.btn-plus {
    width: 37px;
    height: 34px;
    flex: none;
    display: flex;
    align-items: center;
    justify-content: center;
    background: #00a65a;
    border: 1px solid #008d4c;
    border-radius: 0 3px 3px 0;
}
.todo-head {
    height: 61px;
}
.todo-head h2 {
    padding-top: 5px;
    font-size: 18.500px;
}
.todo-head .box-icon {
    margin-top: 6px;
}
.pager {
    display: flex;
    width: 134px;
    height: 30px;
    background: #f4f4f4;
    border: 1px solid #ddd;
    border-bottom-width: 2px;
}
.pager li {
    flex: 1;
    display: flex;
    align-items: center;
    justify-content: center;
    border-left: 1px solid #ddd;
    font-size: 12px;
    background: #fafafa;
    color: #444;
}
.pager li:first-child {
    border-left: 0;
}
.pager-end {
    font-size: 10px !important;
    color: #777 !important;
}
.todo {
    display: flex;
    flex-direction: column;
    gap: 2px;
    padding: 0 10px;
}
.todo li {
    height: 41px;
    display: flex;
    align-items: flex-start;
    flex: none;
    padding: 13px 0 0 14px;
    background: #f3f4f6;
    border-left: 2px solid #e6e7e8;
    border-radius: 2px;
}
.grip {
    width: 10px;
    display: grid;
    grid-template-columns: 4px 4px;
    gap: 1px 2px;
    margin-top: 1px;
}
.grip i {
    width: 3px;
    height: 3px;
    background: #444;
}
.check {
    width: 18px;
    height: 18px;
    margin-left: 8px;
    background: #fff;
    border: 1px solid #ddd;
}
.todo-text {
    margin: -1px 0 0 8px;
    font-size: 13.300px;
    font-weight: 700;
    color: #444;
}
.tag {
    display: flex;
    align-items: center;
    gap: 2px;
    height: 16px;
    margin: 1px 0 0 13px;
    padding: 0 4px;
    border-radius: 2px;
    color: #fff;
    font-size: 9.200px;
    font-weight: 700;
}
.tag-red { background: #d9534f; }
.tag-cyan { background: #5bc0de; }
.tag-orange { background: #f0ad4e; }
.tag-green { background: #5cb85c; }

/* Settings tab */
.gear-tab {
    position: absolute;
    right: 0;
    top: 150px;
    width: 44px;
    height: 42px;
    display: flex;
    align-items: center;
    justify-content: center;
    background: rgba(0, 0, 0, .72);
    border-radius: 5px 0 0 5px;
}

/* Scrollbar */
.scrollbar {
    position: relative;
    width: 15px;
    flex: none;
    padding: 15px 2px 0;
    background: #f1f1f1;
}
.sb-thumb {
    height: 488px;
    background: #c1c1c1;
}
.sb-up, .sb-down {
    position: absolute;
    left: 4px;
    border: 4px solid transparent;
}
.sb-up {
    top: 3px;
    border-bottom-color: #a3a3a3;
    border-top: 0;
}
.sb-down {
    bottom: 3px;
    border-top-color: #555;
    border-bottom: 0;
}
```
